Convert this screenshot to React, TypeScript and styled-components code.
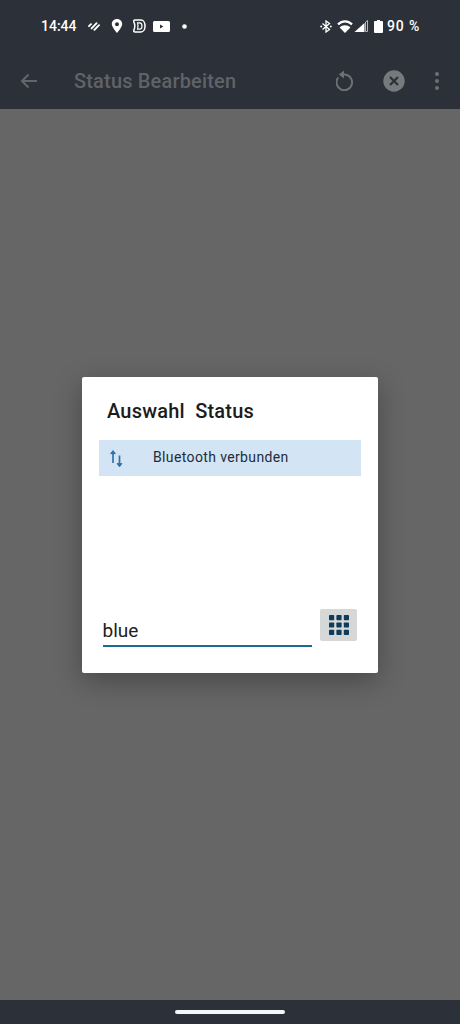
import styled, { createGlobalStyle } from 'styled-components';

const GlobalStyle = createGlobalStyle`
  html, body {
    margin: 0;
    padding: 0;
    background: #666666;
  }
  * {
    box-sizing: border-box;
  }
`;

const Screen = styled.div`
  width: 460px;
  height: 1024px;
  display: flex;
  flex-direction: column;
  overflow: hidden;
  font-family: Roboto, 'Liberation Sans', sans-serif;
`;

const Header = styled.header`
  height: 109px;
  background: #2c3038;
  display: flex;
  flex-direction: column;
`;

const StatusBar = styled.div`
  height: 52px;
  padding: 0 41px;
  display: flex;
  align-items: center;
  justify-content: space-between;
  color: #fff;
`;

const StatusGroup = styled.div`
  display: flex;
  align-items: center;
`;

const Clock = styled.span`
  width: 35px;
  font-size: 14px;
  font-weight: 500;
  margin-right: 12px;
  white-space: nowrap;
`;

const BatteryText = styled.span`
  font-size: 14px;
  font-weight: 500;
  letter-spacing: 0.8px;
  margin-left: 4px;
  margin-right: -1px;
`;

const StatusIcon = styled.svg<{ $gap?: number }>`
  display: block;
  margin-right: ${({ $gap }) => $gap ?? 0}px;
  fill: #fff;
`;

const Toolbar = styled.div`
  height: 57px;
  padding: 0 21px 0 19px;
  display: flex;
  align-items: center;
`;

const Title = styled.span`
  flex: 1;
  margin-left: 35px;
  font-size: 20px;
  font-weight: 500;
  letter-spacing: 0.17px;
  color: #5f6368;
`;

const ToolIcon = styled.svg<{ $gap?: number }>`
  display: block;
  margin-right: ${({ $gap }) => $gap ?? 0}px;
`;

const Scrim = styled.main`
  flex: 1;
  background: #666666;
  display: flex;
  justify-content: center;
  align-items: flex-start;
  padding-top: 268px;
`;

const Dialog = styled.section`
  width: 296px;
  height: 296px;
  background: #fff;
  border-radius: 2px;
  box-shadow: 0 8px 28px rgba(0, 0, 0, 0.3);
  padding: 0 17px;
  display: flex;
  flex-direction: column;
`;

const DialogTitle = styled.h2`
  margin: 22px 0 0 8px;
  height: 41px;
  font-size: 20px;
  line-height: 24px;
  font-weight: 500;
  letter-spacing: 0.2px;
  color: #1c1c1c;
  white-space: pre;
`;

const ResultRow = styled.div`
  height: 36px;
  background: #d3e4f5;
  display: flex;
  align-items: center;
  padding-left: 9px;
`;

const RowLabel = styled.span`
  margin: 0 0 2px 29px;
  font-size: 14px;
  letter-spacing: 0.37px;
  color: #1d2c3a;
`;

const Spacer = styled.div`
  flex: 1;
`;

const InputRow = styled.div`
  display: flex;
  align-items: flex-end;
  padding: 0 4px 26px 3.5px;
`;

const SearchInput = styled.div`
  width: 209.5px;
  height: 30px;
  border-bottom: 2px solid #1c6a96;
  font-size: 19px;
  line-height: 27px;
  color: #212121;
`;

const KeypadButton = styled.button`
  width: 37px;
  height: 32px;
  margin: 0 0 6px 8px;
  padding: 0;
  border: none;
  border-radius: 2px;
  background: #d6d7d7;
  display: flex;
  align-items: center;
  justify-content: center;
`;

const NavBar = styled.footer`
  height: 24px;
  background: #2c3038;
  display: flex;
  justify-content: center;
  padding-top: 10px;
`;

const HomeHandle = styled.div`
  width: 110px;
  height: 4px;
  border-radius: 2px;
  background: #f4f7f8;
`;

const keypadCells = [0, 1, 2].flatMap((row) => [0, 1, 2].map((col) => ({ row, col })));

const App = () => (
  <Screen>
    <GlobalStyle />
    <Header>
      <StatusBar>
        <StatusGroup>
          <Clock>14:44</Clock>
          <StatusIcon $gap={11} width="12" height="10" viewBox="0 0 12 10">
            <g fill="none" stroke="#fff" strokeWidth="1.9" strokeLinecap="round">
              <path d="M1 5.2L3 3.2" />
              <path d="M3.6 7.4L8.6 2.2" />
              <path d="M6.4 8.8L11 4.2" />
            </g>
          </StatusIcon>
          <StatusIcon $gap={9} width="12" height="14" viewBox="0 0 12 14">
            <path fillRule="evenodd" d="M6 0C2.8 0 .8 2.4 .8 5.1 .8 8.6 6 14 6 14S11.2 8.6 11.2 5.1C11.2 2.4 9.2 0 6 0ZM6 3.2A2 2 0 1 1 6 7.2 2 2 0 0 1 6 3.2Z" />
          </StatusIcon>
          <StatusIcon $gap={7} width="14" height="14" viewBox="0 0 14 14">
            <path fill="none" stroke="#fff" strokeWidth="1.5" d="M3 1H9C11.5 1 13 3.8 13 7S11.5 13 9 13H3C2 13 1.5 12.2 1.8 11.4 2.4 10 2.8 8.5 2.8 7S2.4 4 1.8 2.6C1.5 1.8 2 1 3 1Z" />
            <path fill="none" stroke="#fff" strokeWidth="1.2" d="M5.6 3.8H7.8C9 3.8 10 5.2 10 7S9 10.2 7.8 10.2H5.6C6.2 8 6.2 6 5.6 3.8Z" />
          </StatusIcon>
          <StatusIcon $gap={12} width="17" height="11" viewBox="0 0 17 11">
            <path fillRule="evenodd" d="M1.5 0H15.5A1.5 1.5 0 0 1 17 1.5V9.5A1.5 1.5 0 0 1 15.5 11H1.5A1.5 1.5 0 0 1 0 9.5V1.5A1.5 1.5 0 0 1 1.5 0ZM7 3.6V7.4L10.4 5.5Z" />
          </StatusIcon>
          <StatusIcon width="5" height="5" viewBox="0 0 5 5">
            <circle cx="2.5" cy="2.5" r="2.3" />
          </StatusIcon>
        </StatusGroup>
        <StatusGroup>
          <StatusIcon $gap={5} width="12" height="13" viewBox="0 0 12 13">
            <path fill="none" stroke="#fff" strokeWidth="1.3" d="M2.5 3.5L9.5 9.5 6 12V1L9.5 3.5 2.5 9.5" />
            <circle cx="1.2" cy="6.5" r="1" />
            <circle cx="10.8" cy="6.5" r="1" />
          </StatusIcon>
          <StatusIcon $gap={1} width="16" height="13" viewBox="0 0 16 13">
            <path d="M8 13L2.6 7.4C4 6.1 5.9 5.2 8 5.2S12 6.1 13.4 7.4Z" />
            <path fill="none" stroke="#fff" strokeWidth="2.2" d="M1 4.4C2.9 2.5 5.3 1.3 8 1.3S13.1 2.5 15 4.4" />
          </StatusIcon>
          <StatusIcon $gap={6} width="14" height="12" viewBox="0 0 14 12">
            <path d="M10.5 2.9V12H0.5Z" />
            <path fill="none" stroke="#b4b6b8" strokeWidth="1" d="M11.5 2L13.5 0.5V11.5H11.5Z" />
          </StatusIcon>
          <StatusIcon width="9" height="13" viewBox="0 0 9 13">
            <path d="M3 0H6V1H8A1 1 0 0 1 9 2V12A1 1 0 0 1 8 13H1A1 1 0 0 1 0 12V2A1 1 0 0 1 1 1H3Z" />
          </StatusIcon>
          <BatteryText>90 %</BatteryText>
        </StatusGroup>
      </StatusBar>
      <Toolbar>
        <ToolIcon width="20" height="20" viewBox="0 0 20 20" fill="none" stroke="#62666b" strokeWidth="2">
          <path d="M18 10H3M9.5 3.5L3 10 9.5 16.5" />
        </ToolIcon>
        <Title>Status Bearbeiten</Title>
        <ToolIcon $gap={29} width="18" height="21" viewBox="0 0 18 21" fill="none">
          <path stroke="#6d7175" strokeWidth="2" d="M2.2 7.5A7.8 7.8 0 1 0 9 4.6H7" />
          <path fill="#6d7175" d="M8 0.5V8.5L2.8 4.5Z" />
        </ToolIcon>
        <ToolIcon $gap={30} width="22" height="22" viewBox="0 0 22 22">
          <circle cx="11" cy="11" r="10.7" fill="#777a7c" />
          <path d="M7 7L15 15M15 7L7 15" stroke="#2c3038" strokeWidth="2.2" />
        </ToolIcon>
        <ToolIcon width="4" height="18" viewBox="0 0 4 18" fill="#6d7175">
          <circle cx="2" cy="2" r="2" />
          <circle cx="2" cy="9" r="2" />
          <circle cx="2" cy="16" r="2" />
        </ToolIcon>
      </Toolbar>
    </Header>
    <Scrim>
      <Dialog>
        <DialogTitle>Auswahl  Status</DialogTitle>
        <ResultRow>
          <svg width="16" height="20" viewBox="0 0 16 20" fill="none" stroke="#2f74ab" strokeWidth="1.7">
            <path d="M5 15V3.5" />
            <path fill="#2f74ab" strokeWidth="1" d="M2.6 5.6L5 2.6 7.4 5.6Z" />
            <path d="M11.5 7.5V18" />
            <path fill="#2f74ab" strokeWidth="1" d="M9.1 15.6L11.5 18.8 13.9 15.6Z" />
          </svg>
          <RowLabel>Bluetooth verbunden</RowLabel>
        </ResultRow>
        <Spacer />
        <InputRow>
          <SearchInput>blue</SearchInput>
          <KeypadButton aria-label="Tastatur">
            <svg width="20" height="20" viewBox="0 0 20 20" fill="#0e3d5c">
              {keypadCells.map(({ row, col }) => (
                <rect key={`${row}-${col}`} x={col * 7.4} y={row * 7.4} width="5.2" height="5.2" rx="0.8" />
              ))}
            </svg>
          </KeypadButton>
        </InputRow>
      </Dialog>
    </Scrim>
    <NavBar>
      <HomeHandle />
    </NavBar>
  </Screen>
);

export default App;
